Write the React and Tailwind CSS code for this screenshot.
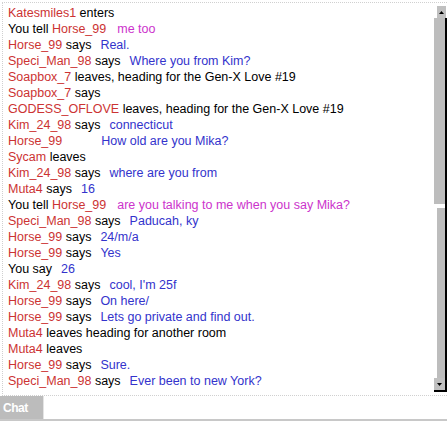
import React from 'react';

const RED = 'text-[#cc3333]';
const BLUE = 'text-[#3333cc]';
const PINK = 'text-[#cc33cc]';

const lines = [
  { name: 'Katesmiles1', verb: 'enters' },
  { tell: 'Horse_99', msg: 'me too' },
  { name: 'Horse_99', verb: 'says', msg: 'Real.' },
  { name: 'Speci_Man_98', verb: 'says', msg: 'Where you from Kim?' },
  { name: 'Soapbox_7', verb: 'leaves, heading for the Gen-X Love #19' },
  { name: 'Soapbox_7', verb: 'says' },
  { name: 'GODESS_OFLOVE', verb: 'leaves, heading for the Gen-X Love #19' },
  { name: 'Kim_24_98', verb: 'says', msg: 'connecticut' },
  { name: 'Horse_99', verb: '', msg: 'How old are you Mika?', gap: 'ml-[39px]' },
  { name: 'Sycam', verb: 'leaves' },
  { name: 'Kim_24_98', verb: 'says', msg: 'where are you from' },
  { name: 'Muta4', verb: 'says', msg: '16' },
  { tell: 'Horse_99', msg: 'are you talking to me when you say Mika?' },
  { name: 'Speci_Man_98', verb: 'says', msg: 'Paducah, ky' },
  { name: 'Horse_99', verb: 'says', msg: '24/m/a' },
  { name: 'Horse_99', verb: 'says', msg: 'Yes' },
  { say: true, msg: '26' },
  { name: 'Kim_24_98', verb: 'says', msg: "cool, I'm 25f" },
  { name: 'Horse_99', verb: 'says', msg: 'On here/' },
  { name: 'Horse_99', verb: 'says', msg: 'Lets go private and find out.' },
  { name: 'Muta4', verb: 'leaves heading for another room' },
  { name: 'Muta4', verb: 'leaves' },
  { name: 'Horse_99', verb: 'says', msg: 'Sure.' },
  { name: 'Speci_Man_98', verb: 'says', msg: 'Ever been to new York?' },
];

function Line({ l }) {
  if (l.tell) {
    return (
      <div className="h-4 whitespace-nowrap">
        <span className="text-black">You tell </span>
        <span className={RED}>{l.tell}</span>
        <span className={`${PINK} ml-[11px]`}>{l.msg}</span>
      </div>
    );
  }
  if (l.say) {
    return (
      <div className="h-4 whitespace-nowrap">
        <span className="text-black">You say</span>
        <span className={`${BLUE} ml-[9px]`}>{l.msg}</span>
      </div>
    );
  }
  return (
    <div className="h-4 whitespace-nowrap">
      <span className={RED}>{l.name}</span>
      {l.verb && <span className="text-black"> {l.verb}</span>}
      {l.msg && <span className={`${BLUE} ${l.gap || 'ml-[9px]'}`}>{l.msg}</span>}
    </div>
  );
}

function Scrollbar() {
  return (
    <div className="w-[13px] h-full flex flex-col pt-[3px]">
      {/* up button */}
      <div className="h-[12px] ml-[3px] w-[9px] bg-[#c0c0c0] flex items-center justify-center">
        <svg width="5" height="3" viewBox="0 0 5 3"><path d="M2.5 0L5 3H0z" fill="#000" /></svg>
      </div>
      {/* upper track */}
      <div className="h-[186px] bg-[#bdbdbd] border-r-2 border-black" />
      <div className="h-[4px] border-r-2 border-black" />
      {/* lower track */}
      <div className="flex-1 ml-[3px] bg-[#bdbdbd] border-r-2 border-black" />
      {/* down button */}
      <div className="h-[14px] bg-[#c0c0c0] border-r-2 border-b-2 border-black flex items-center justify-center">
        <svg width="5" height="3" viewBox="0 0 5 3"><path d="M0 0H5L2.5 3z" fill="#000" /></svg>
      </div>
      <div className="h-[3px]" />
    </div>
  );
}

export default function App() {
  return (
    <div className="w-[447px] h-[422px] bg-white overflow-hidden font-['Liberation_Sans',Arial,sans-serif] text-[12.5px] leading-4">
      <div className="mt-[2px] ml-[2px] h-[394px] flex border-t border-l border-b border-dotted border-[#d0d0d0]">
        <div className="flex-1 pl-[5px] pt-[2px] overflow-hidden">
          {lines.map((l, i) => <Line key={i} l={l} />)}
        </div>
        <Scrollbar />
      </div>
      <div className="flex h-[25px] border-b-2 border-[#c8c8c8]">
        <div className="w-[43px] bg-[#bcbcbc] flex items-center pl-[3px]">
          <span className="text-white font-bold text-[12px] tracking-[-0.5px]">Chat</span>
        </div>
        <div className="flex-1 bg-white border-l border-[#e4e4e4]" />
      </div>
    </div>
  );
}
